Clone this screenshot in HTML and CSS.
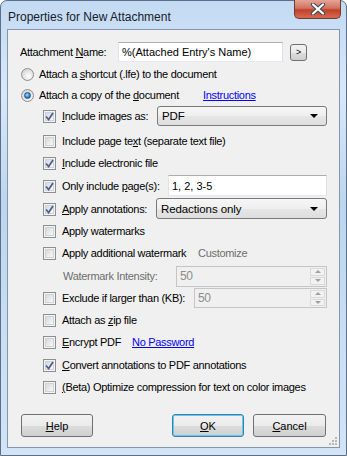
FILE: index.html
```html
<!DOCTYPE html>
<html lang="en">
<head>
  <meta charset="UTF-8">
  <title>Properties for New Attachment</title>
  <link rel="stylesheet" href="styles.css">
</head>
<body>
  <div class="window">
    <div class="titlebar">
      <span class="title">Properties for New Attachment</span>
      <div class="close">
        <svg width="16" height="12" viewBox="0 0 16 12">
          <path d="M3 1.5 L13 10.5 M13 1.5 L3 10.5" stroke="#3b4a5c" stroke-width="4.2" stroke-linecap="round"/>
          <path d="M3 1.5 L13 10.5 M13 1.5 L3 10.5" stroke="#ffffff" stroke-width="2.2" stroke-linecap="round"/>
        </svg>
      </div>
    </div>

    <div class="client">
      <div class="row name-row">
        <span class="name-label">Attachment <u>N</u>ame:</span>
        <div class="textbox name-box">%(Attached Entry's Name)</div>
        <div class="small-btn">&gt;</div>
      </div>

      <div class="row radio-row r1">
        <span class="radio"></span>
        <span>Attach a <u>s</u>hortcut (.lfe) to the document</span>
      </div>
      <div class="row radio-row r2">
        <span class="radio on"></span>
        <span class="copy-label">Attach a copy of the <u>d</u>ocument</span>
        <a class="link" href="#">Instructions</a>
      </div>

      <div class="row check-row h22">
        <span class="check on"><svg width="9" height="9" viewBox="0 0 9 9"><path d="M1 4.5 L3.6 7.5 L8 1" fill="none" stroke="#4b5e96" stroke-width="1.7"/></svg></span>
        <span><u>I</u>nclude images as:</span>
        <div class="combo w170">PDF<span class="arrow"></span></div>
      </div>
      <div class="row check-row h22 gap3">
        <span class="check"></span>
        <span>Include page te<u>x</u>t (separate text file)</span>
      </div>
      <div class="row check-row h22">
        <span class="check on"><svg width="9" height="9" viewBox="0 0 9 9"><path d="M1 4.5 L3.6 7.5 L8 1" fill="none" stroke="#4b5e96" stroke-width="1.7"/></svg></span>
        <span><u>I</u>nclude electronic file</span>
      </div>
      <div class="row check-row h23">
        <span class="check on"><svg width="9" height="9" viewBox="0 0 9 9"><path d="M1 4.5 L3.6 7.5 L8 1" fill="none" stroke="#4b5e96" stroke-width="1.7"/></svg></span>
        <span>Only include <u>p</u>age(s):</span>
        <div class="textbox pages-box">1, 2, 3-5</div>
      </div>
      <div class="row check-row h23">
        <span class="check on"><svg width="9" height="9" viewBox="0 0 9 9"><path d="M1 4.5 L3.6 7.5 L8 1" fill="none" stroke="#4b5e96" stroke-width="1.7"/></svg></span>
        <span><u>A</u>pply annotations:</span>
        <div class="combo w171">Redactions only<span class="arrow"></span></div>
      </div>
      <div class="row check-row h21">
        <span class="check"></span>
        <span>Apply watermarks</span>
      </div>
      <div class="row check-row h24">
        <span class="check"></span>
        <span class="wm-label">Apply additional watermark</span>
        <span class="muted">Customize</span>
      </div>
      <div class="row indent-row h22">
        <span class="muted">Watermark Intensity:</span>
        <div class="spin w151"><span class="spin-val">50</span><span class="spin-btns"><i class="up"></i><i class="down"></i></span></div>
      </div>
      <div class="row check-row h22">
        <span class="check"></span>
        <span>Exclude if larger than (KB):</span>
        <div class="spin w133"><span class="spin-val">50</span><span class="spin-btns"><i class="up"></i><i class="down"></i></span></div>
      </div>
      <div class="row check-row h22">
        <span class="check"></span>
        <span>Attach as <u>z</u>ip file</span>
      </div>
      <div class="row check-row h22">
        <span class="check"></span>
        <span class="enc-label"><u>E</u>ncrypt PDF</span>
        <a class="link" href="#">No Password</a>
      </div>
      <div class="row check-row h23">
        <span class="check on"><svg width="9" height="9" viewBox="0 0 9 9"><path d="M1 4.5 L3.6 7.5 L8 1" fill="none" stroke="#4b5e96" stroke-width="1.7"/></svg></span>
        <span><u>C</u>onvert annotations to PDF annotations</span>
      </div>
      <div class="row check-row h22">
        <span class="check"></span>
        <span><u>(</u>Beta) Optimize compression for text on color images</span>
      </div>

      <div class="button-row">
        <div class="btn"><u>H</u>elp</div>
        <div class="btn default"><u>O</u>K</div>
        <div class="btn"><u>C</u>ancel</div>
      </div>

      <svg class="grip" width="10" height="10" viewBox="0 0 10 10">
        <rect x="7" y="1" width="2" height="2" fill="#b8b8b8"/>
        <rect x="4" y="4" width="2" height="2" fill="#b8b8b8"/>
        <rect x="7" y="4" width="2" height="2" fill="#b8b8b8"/>
        <rect x="1" y="7" width="2" height="2" fill="#b8b8b8"/>
        <rect x="4" y="7" width="2" height="2" fill="#b8b8b8"/>
        <rect x="7" y="7" width="2" height="2" fill="#b8b8b8"/>
      </svg>
    </div>
  </div>
</body>
</html>
```

FILE: styles.css
```css
body {
  margin: 0;
  font-family: "Liberation Sans", Arial, sans-serif;
  font-size: 11px;
  letter-spacing: -0.3px;
  color: #000;
  background: #fff;
}
.window {
  width: 347px;
  height: 456px;
  box-sizing: border-box;
  border: 1px solid #5b6f86;
  border-radius: 7px 7px 0 0;
  background: linear-gradient(180deg, #c3daf2 0%, #d8e8f8 20%, #bcd6ef 45%, #c9dff4 75%, #d2e4f6 100%);
  display: flex;
  flex-direction: column;
}
.titlebar {
  height: 28px;
  display: flex;
  align-items: flex-start;
}
.title {
  font-size: 12px;
  letter-spacing: 0;
  color: #15202c;
  padding-left: 7px;
  margin-top: 9px;
}
.close {
  margin-left: auto;
  margin-right: 5px;
  margin-top: -1px;
  width: 47px;
  height: 19px;
  box-sizing: border-box;
  border: 1px solid #6e3b36;
  border-top: none;
  border-radius: 0 0 5px 5px;
  background: linear-gradient(180deg, #e6a496 0%, #d2735f 45%, #c1412a 55%, #d56b4f 100%);
  display: flex;
  align-items: center;
  justify-content: center;
}
.client {
  flex: 1;
  margin: 0 6px 7px 6px;
  border: 1px solid #8396ad;
  background: #f0f0f0;
  position: relative;
  padding-top: 11px;
}
.row {
  display: flex;
  align-items: center;
  height: 22px;
  padding-right: 12px;
}
.h21 { height: 21px; }
.h22 { height: 22px; }
.h23 { height: 23px; }
.h24 { height: 24px; }
.gap3 { margin-top: 3px; }

.name-row {
  padding-left: 12px;
}
.name-label {
  width: 98px;
}
.textbox {
  box-sizing: border-box;
  height: 20px;
  background: #fff;
  border: 1px solid;
  border-color: #abadb3 #dbdfe6 #e3e9ef #e2e3ea;
  padding: 0 0 0 3px;
  display: flex;
  align-items: center;
  font-size: 11px;
  letter-spacing: 0;
}
.name-box {
  width: 165px;
}
.pages-box {
  width: 159px;
  height: 21px;
  margin-left: auto;
}
.small-btn {
  width: 17px;
  height: 17px;
  box-sizing: border-box;
  margin-left: 7px;
  border: 1px solid #707070;
  border-radius: 3px;
  background: linear-gradient(180deg, #f2f2f2 0%, #ebebeb 50%, #dddddd 51%, #cfcfcf 100%);
  font-size: 9px;
  display: flex;
  align-items: center;
  justify-content: center;
}

.radio-row {
  padding-left: 13px;
}
.r1 { height: 21px; }
.r2 { height: 21px; }
.radio {
  width: 13px;
  height: 13px;
  box-sizing: border-box;
  border-radius: 50%;
  border: 1px solid #8e8f8f;
  background: radial-gradient(circle at 60% 65%, #ffffff 0%, #e6e6e6 45%, #c9c9c9 100%);
  margin-right: 5px;
  margin-top: 1px;
  display: flex;
  align-items: center;
  justify-content: center;
}
.radio.on::after {
  content: "";
  width: 5px;
  height: 5px;
  border-radius: 50%;
  border: 1px solid #1d4f87;
  background: radial-gradient(circle at 40% 35%, #a9dcf7 0%, #2f8bd0 55%, #174f8c 100%);
}
.copy-label {
  width: 164px;
}
.link {
  color: #0000ff;
  text-decoration: underline;
}

.check-row {
  padding-left: 35px;
}
.indent-row {
  padding-left: 55px;
}
.check {
  width: 13px;
  height: 13px;
  box-sizing: border-box;
  border: 1px solid #8e8f8f;
  background: #f4f4f4;
  margin-right: 6px;
  margin-top: 1px;
  position: relative;
  flex: none;
  display: flex;
  align-items: center;
  justify-content: center;
}
.check::before {
  content: "";
  position: absolute;
  left: 1px;
  top: 1px;
  width: 9px;
  height: 9px;
  border: 1px solid #cfd2d6;
  box-sizing: border-box;
  background: linear-gradient(135deg, #d6d8db 0%, #ececec 60%, #f8f8f8 100%);
}
.check svg {
  position: relative;
}

.combo {
  margin-left: auto;
  height: 20px;
  box-sizing: border-box;
  border: 1px solid #7a7a7a;
  border-radius: 3px;
  background: linear-gradient(180deg, #f6f6f6 0%, #efefef 50%, #e6e6e6 51%, #dedede 100%);
  font-size: 11.5px;
  letter-spacing: -0.1px;
  padding-left: 4px;
  display: flex;
  align-items: center;
  position: relative;
}
.w170 { width: 170px; }
.w171 { width: 171px; height: 21px; }
.arrow {
  margin-left: auto;
  margin-right: 8px;
  width: 0;
  height: 0;
  border-left: 4px solid transparent;
  border-right: 4px solid transparent;
  border-top: 4px solid #000;
}

.wm-label {
  width: 136px;
}
.muted {
  color: #6d6d6d;
}
.spin {
  margin-left: auto;
  height: 21px;
  box-sizing: border-box;
  border: 1px solid #c5c5c5;
  background: #f0f0f0;
  display: flex;
  align-items: stretch;
}
.w151 { width: 151px; }
.w133 { width: 133px; height: 20px; }
.spin-val {
  flex: 1;
  color: #8d8d8d;
  font-size: 12px;
  padding-left: 3px;
  display: flex;
  align-items: center;
}
.spin-btns {
  width: 15px;
  display: flex;
  flex-direction: column;
  gap: 1px;
  padding: 1px;
}
.spin-btns i {
  flex: 1;
  border: 1px solid #dadada;
  background: #f2f2f2;
  display: flex;
  align-items: center;
  justify-content: center;
}
.spin-btns .up::after {
  content: "";
  border-left: 3px solid transparent;
  border-right: 3px solid transparent;
  border-bottom: 3px solid #a0a0a0;
}
.spin-btns .down::after {
  content: "";
  border-left: 3px solid transparent;
  border-right: 3px solid transparent;
  border-top: 3px solid #a0a0a0;
}
.enc-label {
  width: 70px;
}

.button-row {
  display: flex;
  margin-top: 16px;
  padding: 0 13px;
}
.btn {
  width: 72px;
  height: 23px;
  box-sizing: border-box;
  border: 1px solid #707070;
  border-radius: 3px;
  background: linear-gradient(180deg, #f2f2f2 0%, #ebebeb 50%, #dddddd 51%, #cfcfcf 100%);
  display: flex;
  align-items: center;
  justify-content: center;
  font-size: 11px;
  letter-spacing: 0;
}
.btn.default {
  margin-left: auto;
  border-color: #3c7fb1;
  box-shadow: inset 0 0 0 1px #5fcaf0;
}
.btn.default + .btn {
  margin-left: 9px;
  width: 73px;
}
.grip {
  position: absolute;
  right: 1px;
  bottom: 1px;
}
```
